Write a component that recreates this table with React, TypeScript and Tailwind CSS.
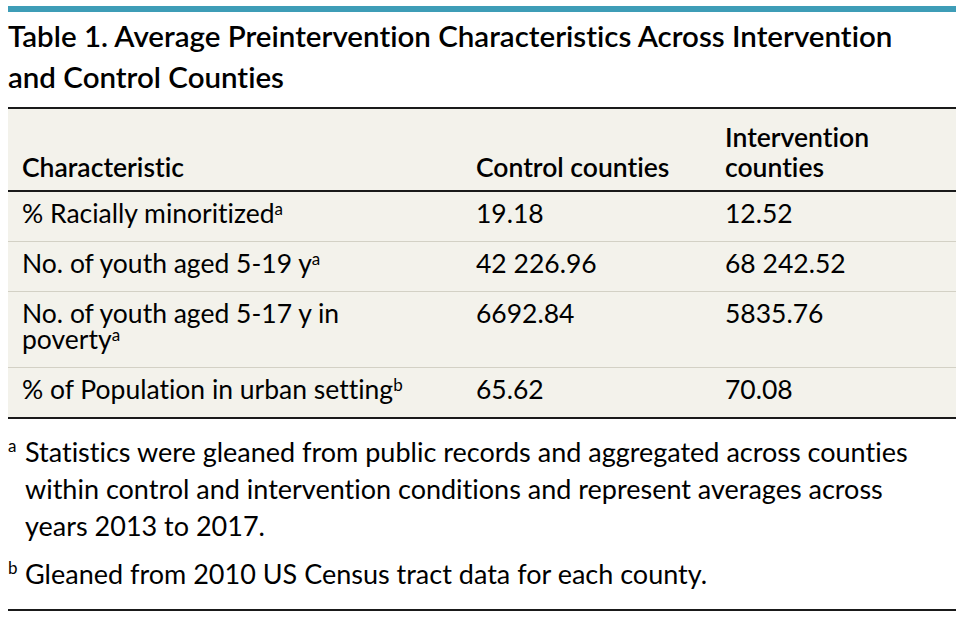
import React from "react";

const Sup = ({ c }: { c: string }) => <sup className="text-[17px] leading-none">{c}</sup>;

const rows: { label: React.ReactNode; c: string; i: string }[] = [
  { label: <>% Racially minoritized<Sup c="a" /></>, c: "19.18", i: "12.52" },
  { label: <>No. of youth aged 5-19 y<Sup c="a" /></>, c: "42 226.96", i: "68 242.52" },
  {
    label: (
      <>
        No. of youth aged 5-17 y in
        <br />
        poverty<Sup c="a" />
      </>
    ),
    c: "6692.84",
    i: "5835.76",
  },
  { label: <>% of Population in urban setting<Sup c="b" /></>, c: "65.62", i: "70.08" },
];

export default function App() {
  return (
    <div
      className="w-[963px] h-[617px] bg-white overflow-hidden text-black [font-variant-ligatures:none]"
      style={{ fontFamily: "Lato, 'Noto Sans', sans-serif" }}
    >
      <div className="mx-[8px] w-[948px] pt-[6px]">
        <div className="h-[6px] bg-[#3e9db7]" />
        <h1 className="mt-[3px] text-[29.5px] leading-[41px] font-semibold">
          Table 1. Average Preintervention Characteristics Across Intervention
          <br />
          and Control Counties
        </h1>
        <div className="mt-[10px] bg-[#f3f2eb] border-t-2 border-b-2 border-[#1a1a1a]">
          <div className="grid grid-cols-[454px_249px_1fr] border-b-2 border-[#1a1a1a] h-[83px] items-end text-[26.5px] leading-[30px] font-semibold">
            <div className="px-[14px] pb-[8px]">Characteristic</div>
            <div className="px-[14px] pb-[8px]">Control counties</div>
            <div className="px-[14px] pb-[8px]">
              Intervention
              <br />
              counties
            </div>
          </div>
          {rows.map((r, idx) => (
            <div
              key={idx}
              className={
                "grid grid-cols-[454px_249px_1fr] text-[26.5px] leading-[26px] " +
                (idx < rows.length - 1 ? "border-b border-[#d3d1c5]" : "")
              }
            >
              <div className="px-[14px] pt-[8px] pb-[15px]">{r.label}</div>
              <div className="px-[14px] pt-[8px] pb-[15px]">{r.c}</div>
              <div className="px-[14px] pt-[8px] pb-[15px]">{r.i}</div>
            </div>
          ))}
        </div>
        <div className="pt-[14px] text-[27px] leading-[37px]">
          <div className="flex">
            <span className="w-[17px] shrink-0 text-[17px] leading-[37px] relative top-[-6px]">a</span>
            <p>
              Statistics were gleaned from public records and aggregated across counties
              <br />
              within control and intervention conditions and represent averages across
              <br />
              years 2013 to 2017.
            </p>
          </div>
          <div className="flex mt-[11px]">
            <span className="w-[17px] shrink-0 text-[17px] leading-[37px] relative top-[-6px]">b</span>
            <p>Gleaned from 2010 US Census tract data for each county.</p>
          </div>
        </div>
        <div className="mt-[17px] h-[2px] bg-[#1a1a1a]" />
      </div>
    </div>
  );
}
